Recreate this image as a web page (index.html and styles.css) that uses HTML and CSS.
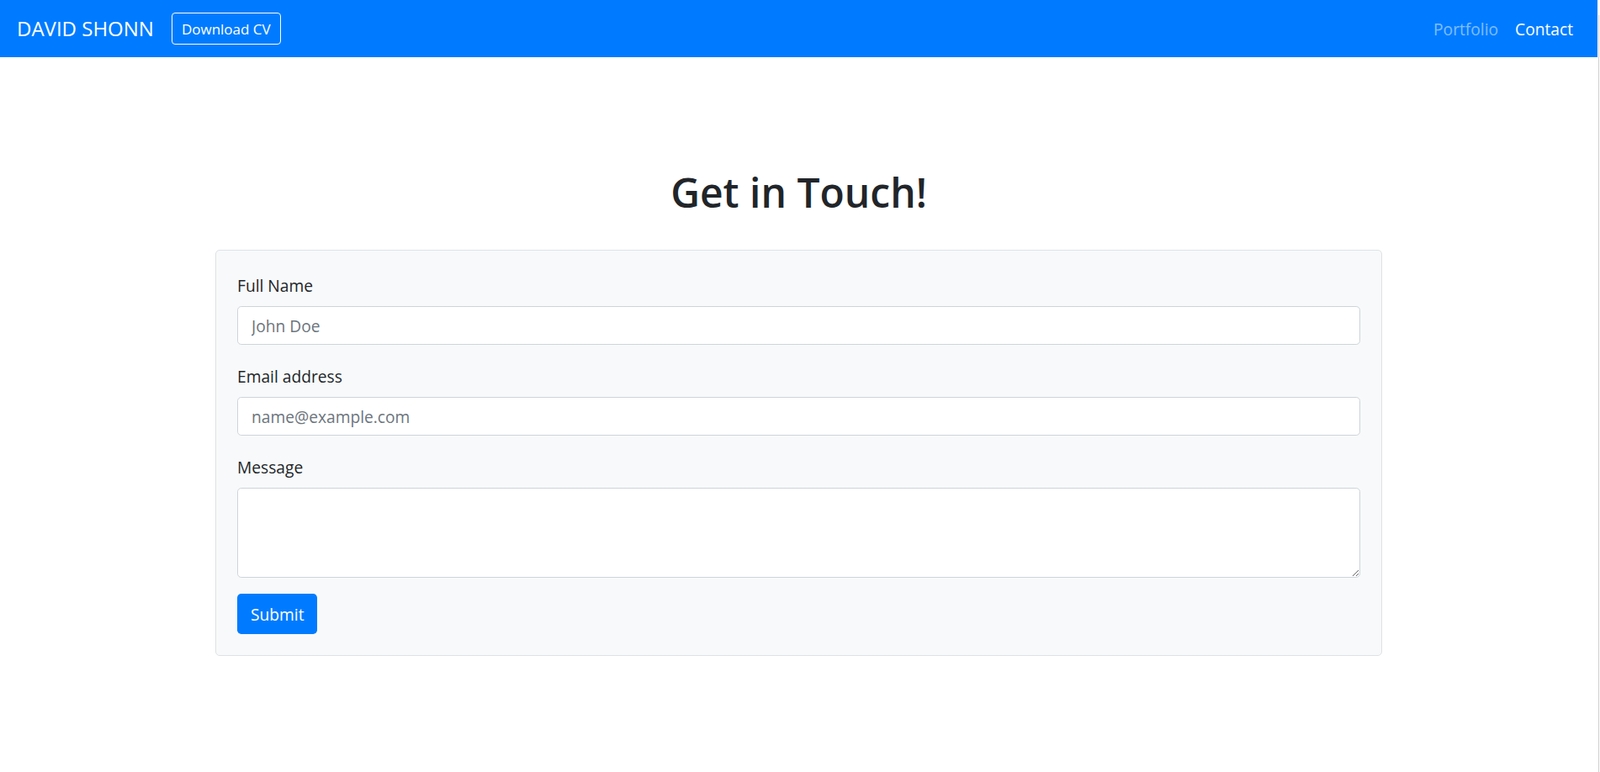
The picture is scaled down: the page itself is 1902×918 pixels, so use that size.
FILE: index.html
```html
<!DOCTYPE html>
<html lang="en">
<head>
<meta charset="utf-8">
<title>David Shonn - Contact</title>
<link rel="stylesheet" href="styles.css">
</head>
<body>
<nav class="navbar">
  <div class="nav-left">
    <a class="brand" href="#">DAVID SHONN</a>
    <a class="btn-cv" href="#">Download CV</a>
  </div>
  <div class="nav-links">
    <a class="nav-link" href="#">Portfolio</a>
    <a class="nav-link active" href="#">Contact</a>
  </div>
</nav>
<main class="main">
  <h1 class="title">Get in Touch!</h1>
  <form class="contact-card">
    <div class="field">
      <label class="field-label" for="name">Full Name</label>
      <input class="field-input" id="name" type="text" placeholder="John Doe">
    </div>
    <div class="field">
      <label class="field-label" for="email">Email address</label>
      <input class="field-input" id="email" type="email" placeholder="name@example.com">
    </div>
    <div class="field field-last">
      <label class="field-label" for="message">Message</label>
      <textarea class="field-textarea" id="message"></textarea>
    </div>
    <button class="btn-submit" type="button">Submit</button>
  </form>
</main>
<div class="scroll-edge"></div>
</body>
</html>
```
FILE: styles.css
```css
* { box-sizing: border-box; }
html, body { margin: 0; }
body {
  padding-right: 3px;
  font-family: "Open Sans", "Noto Sans", "Liberation Sans", sans-serif;
  font-size: 19.2px;
  color: #212529;
  background: #fff;
}
a { text-decoration: none; }

.navbar {
  display: flex;
  align-items: center;
  justify-content: space-between;
  height: 68px;
  padding: 0 19px 0 20px;
  background: #007bff;
}
.nav-left { display: flex; align-items: center; gap: 21px; }
.brand { color: #fff; font-size: 24px; line-height: 1.5; }
.btn-cv {
  display: flex;
  align-items: center;
  height: 38px;
  padding: 0 11px;
  border: 1px solid #fff;
  border-radius: 4px;
  color: #fff;
  font-size: 17px;
}
.nav-links { display: flex; }
.nav-link { padding: 0 10px; color: rgba(255,255,255,.5); font-size: 19.2px; }
.nav-link.active { color: #fff; }

.main {
  display: flex;
  flex-direction: column;
  align-items: center;
  padding-top: 131px;
}
.title {
  margin: 0 0 38px;
  font-size: 48px;
  font-weight: 600;
  line-height: 60px;
}
.contact-card {
  width: 1387px;
  padding: 27px 25px 25px 25px;
  background: #f8f9fa;
  border: 1px solid #dee2e6;
  border-radius: 5px;
}
.field { margin-bottom: 23px; }
.field-last { margin-bottom: 19px; }
.field-label {
  display: block;
  margin-bottom: 10px;
  line-height: 29px;
}
.field-input, .field-textarea {
  display: block;
  width: 100%;
  padding: 0 16px;
  border: 1px solid #ced4da;
  border-radius: 4.8px;
  background: #fff;
  color: #495057;
  font-family: inherit;
  font-size: 19.2px;
}
.field-input { height: 46px; }
.field-textarea { height: 107px; padding-top: 7px; resize: vertical; }
.field-input::placeholder { color: #6c757d; }
.btn-submit {
  display: block;
  height: 48px;
  padding: 0 16px;
  border: none;
  border-radius: 4.8px;
  background: #007bff;
  color: #fff;
  font-family: inherit;
  font-size: 19.2px;
}
.scroll-edge {
  position: fixed;
  top: 18px;
  right: 1px;
  bottom: 0;
  width: 1px;
  background: #cfcfcf;
}
```
